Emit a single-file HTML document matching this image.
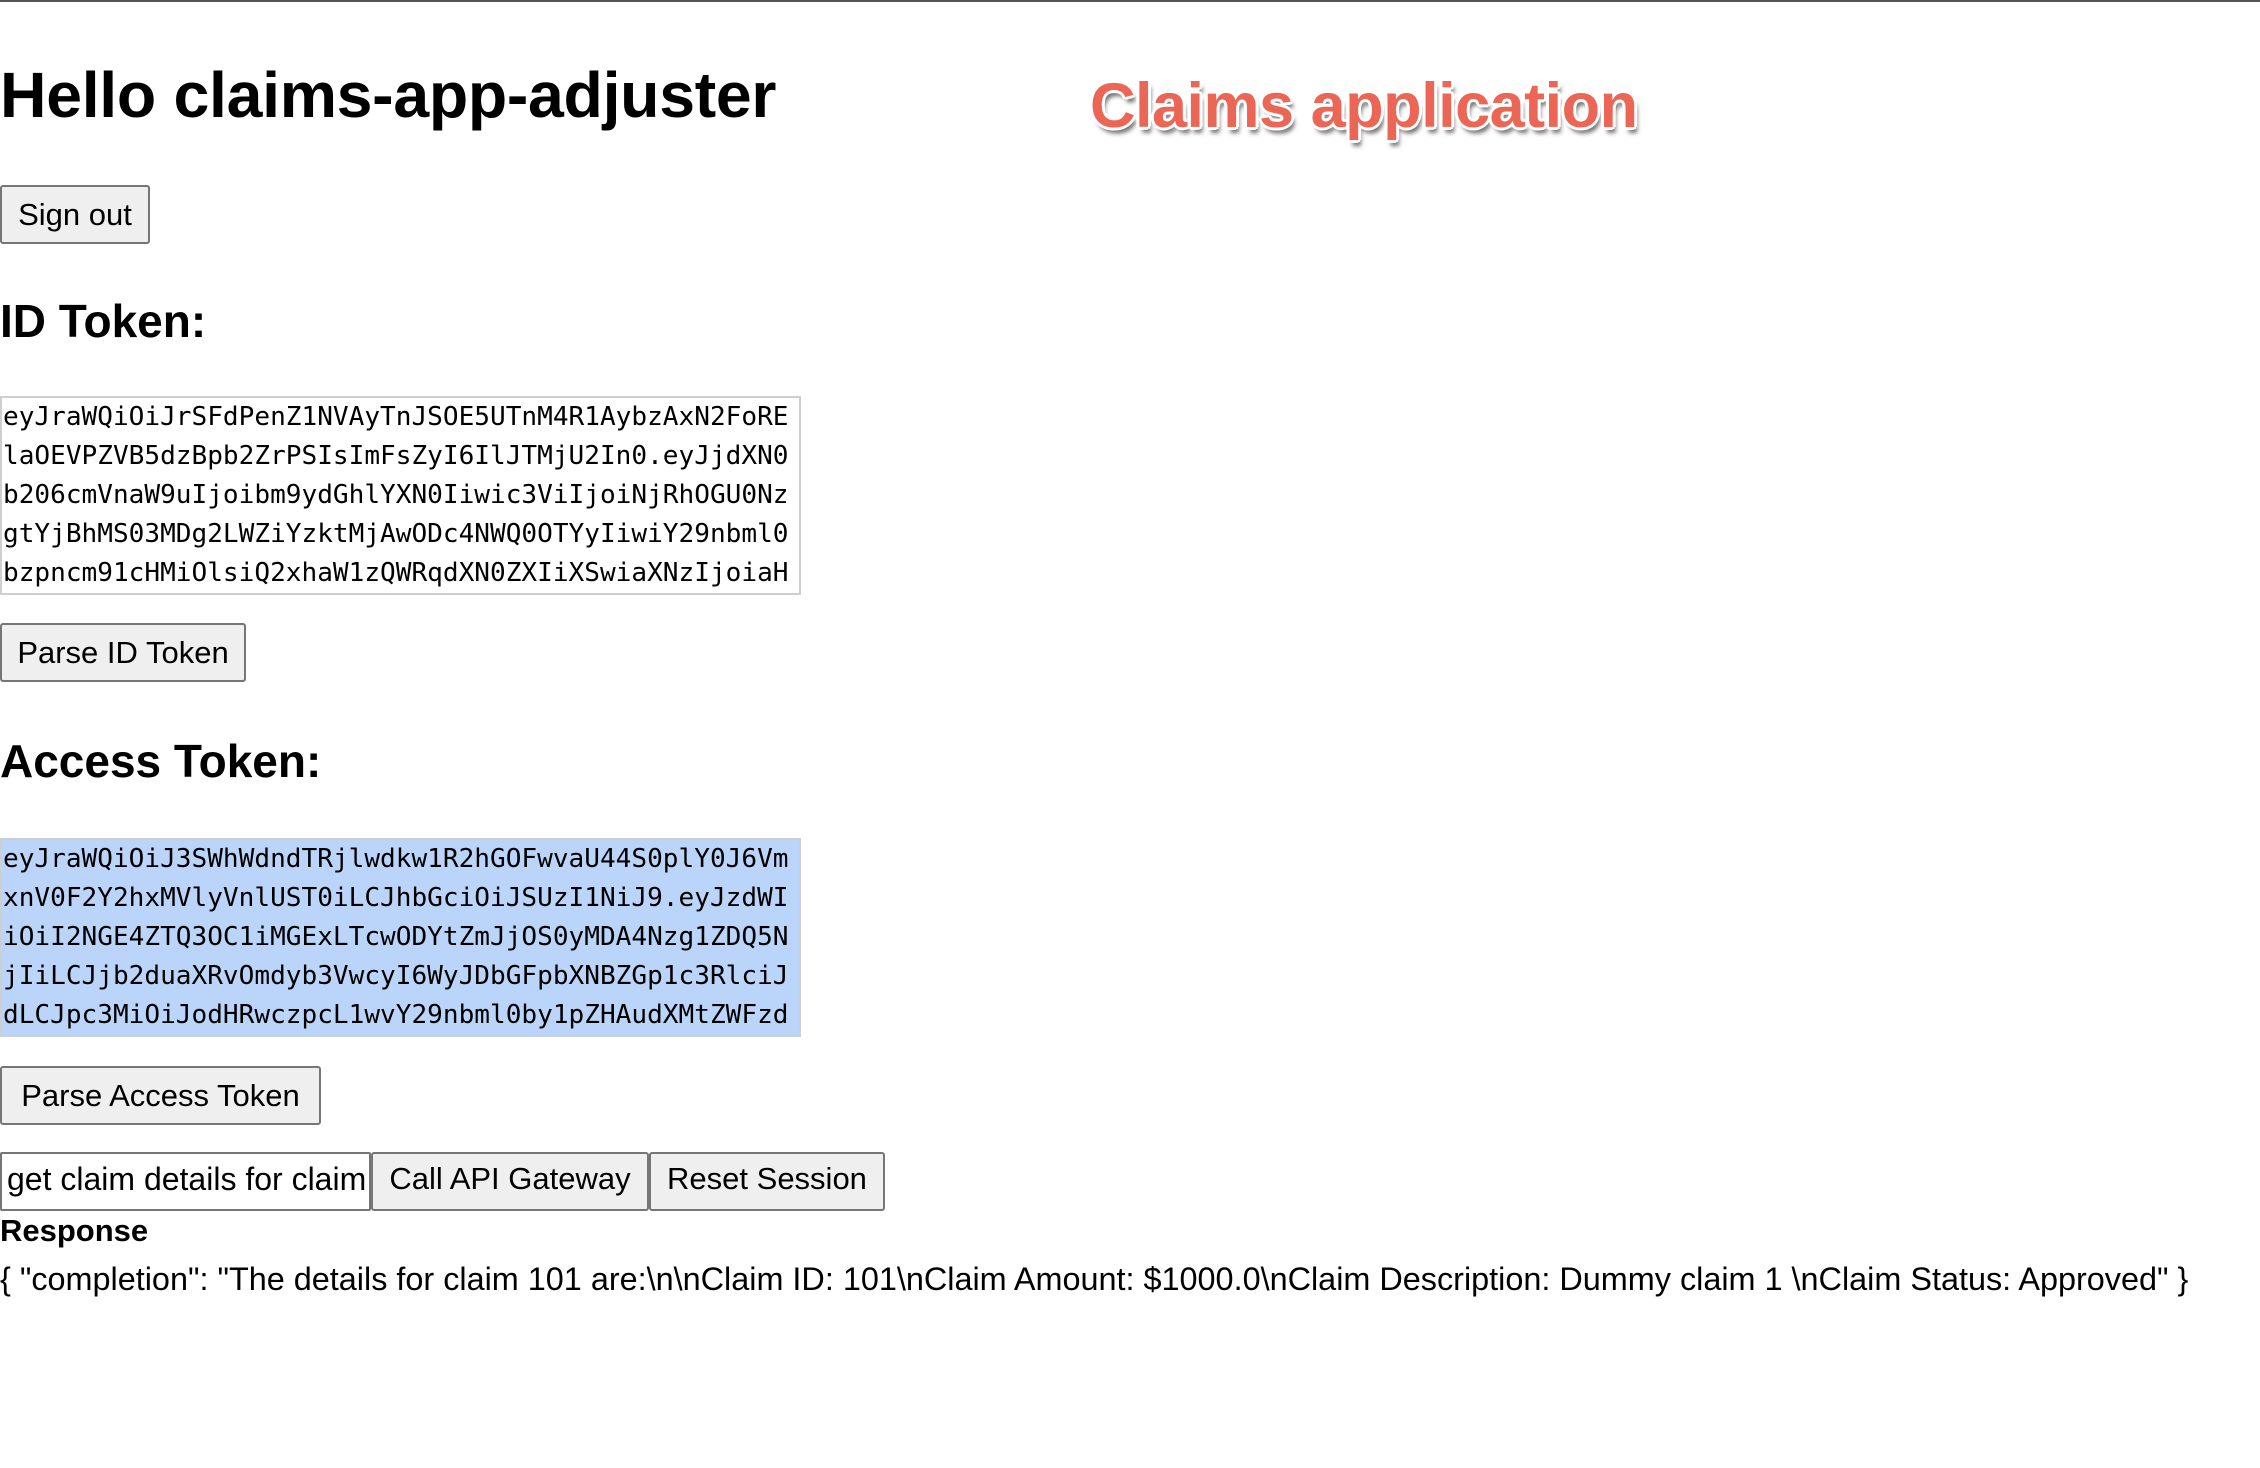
<!DOCTYPE html>
<html><head><meta charset="utf-8"><style>
html,body{margin:0;padding:0;background:#fff;width:2260px;height:1468px;overflow:hidden;position:relative;font-family:"Liberation Sans",Arial,sans-serif;color:#000}
.a{position:absolute;white-space:nowrap}
.topline{position:absolute;left:0;top:0;width:2260px;height:2px;background:#555}
.btn{position:absolute;box-sizing:border-box;background:#efefef;border:2px solid #767676;border-radius:3px;font-size:31px;display:flex;align-items:center;justify-content:center}
.ta{position:absolute;left:0;width:801px;height:199px;box-sizing:border-box;border:2px solid #cfcfcf;font-family:"DejaVu Sans Mono","Liberation Mono",monospace;font-size:26.1px;line-height:39px;padding:0 0 0 1px;overflow:hidden;white-space:pre}
</style></head><body>
<div class="topline"></div>
<div class="a" style="left:0;top:58px;font-size:64.4px;font-weight:bold;letter-spacing:-0.3px">Hello claims-app-adjuster</div>
<div class="a" style="left:1090px;top:70px;font-size:63px;font-weight:bold;color:#ec6656;letter-spacing:-0.5px;text-shadow:3px 0 0 #fff,-3px 0 0 #fff,0 3px 0 #fff,0 -3px 0 #fff,2px 2px 0 #fff,-2px -2px 0 #fff,2px -2px 0 #fff,-2px 2px 0 #fff,3px 6px 4px rgba(0,0,0,.55)">Claims application</div>
<div class="btn" style="left:0;top:185px;width:150px;height:59px">Sign out</div>
<div class="a" style="left:0;top:294px;font-size:46px;font-weight:bold">ID Token:</div>
<div class="ta" style="top:396px">eyJraWQiOiJrSFdPenZ1NVAyTnJSOE5UTnM4R1AybzAxN2FoRE
laOEVPZVB5dzBpb2ZrPSIsImFsZyI6IlJTMjU2In0.eyJjdXN0
b206cmVnaW9uIjoibm9ydGhlYXN0Iiwic3ViIjoiNjRhOGU0Nz
gtYjBhMS03MDg2LWZiYzktMjAwODc4NWQ0OTYyIiwiY29nbml0
bzpncm91cHMiOlsiQ2xhaW1zQWRqdXN0ZXIiXSwiaXNzIjoiaH</div>
<div class="btn" style="left:0;top:623px;width:246px;height:59px">Parse ID Token</div>
<div class="a" style="left:0;top:734px;font-size:46px;font-weight:bold">Access Token:</div>
<div class="ta" style="top:838px;background:#bad5f9">eyJraWQiOiJ3SWhWdndTRjlwdkw1R2hGOFwvaU44S0plY0J6Vm
xnV0F2Y2hxMVlyVnlUST0iLCJhbGciOiJSUzI1NiJ9.eyJzdWI
iOiI2NGE4ZTQ3OC1iMGExLTcwODYtZmJjOS0yMDA4Nzg1ZDQ5N
jIiLCJjb2duaXRvOmdyb3VwcyI6WyJDbGFpbXNBZGp1c3RlciJ
dLCJpc3MiOiJodHRwczpcL1wvY29nbml0by1pZHAudXMtZWFzd</div>
<div class="btn" style="left:0;top:1066px;width:321px;height:59px">Parse Access Token</div>
<div class="a" style="left:0;top:1152px;width:371px;height:59px;box-sizing:border-box;border:2px solid #767676;border-radius:2px;font-size:32px;line-height:51px;padding-left:5px;overflow:hidden">get claim details for claim 101</div>
<div class="btn" style="left:371px;top:1152px;width:278px;height:59px;padding-bottom:6px">Call API Gateway</div>
<div class="btn" style="left:649px;top:1152px;width:236px;height:59px;padding-bottom:6px">Reset Session</div>
<div class="a" style="left:0;top:1213px;font-size:31px;font-weight:bold">Response</div>
<div class="a" style="left:0;top:1261px;font-size:32.4px">{ "completion": "The details for claim 101 are:\n\nClaim ID: 101\nClaim Amount: $1000.0\nClaim Description: Dummy claim 1 \nClaim Status: Approved" }</div>
</body></html>
